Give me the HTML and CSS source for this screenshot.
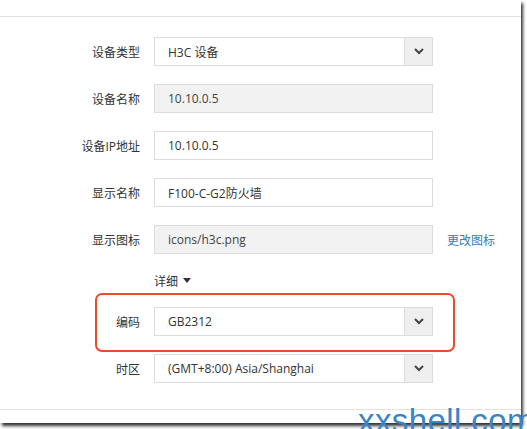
FILE: index.html
```html
<!DOCTYPE html>
<html lang="zh-CN">
<head>
    <meta charset="UTF-8">
    <title>设备属性</title>
    <link rel="stylesheet" href="styles.css">
</head>
<body>
    <div class="dialog">
        <div class="dialog-head"></div>

        <div class="dialog-body">
            <div class="form-row">
                <label class="form-label">设备类型</label>
                <div class="select">
                    <span class="select-value">H3C 设备</span>
                    <span class="select-btn">
                        <svg width="10" height="7" viewBox="0 0 10 7"><polyline points="1,1 5,5 9,1" fill="none" stroke="#444" stroke-width="2"/></svg>
                    </span>
                </div>
            </div>

            <div class="form-row">
                <label class="form-label">设备名称</label>
                <div class="input disabled">10.10.0.5</div>
            </div>

            <div class="form-row">
                <label class="form-label">设备IP地址</label>
                <div class="input">10.10.0.5</div>
            </div>

            <div class="form-row">
                <label class="form-label">显示名称</label>
                <div class="input">F100-C-G2防火墙</div>
            </div>

            <div class="form-row">
                <label class="form-label">显示图标</label>
                <div class="input disabled">icons/h3c.png</div>
                <a href="#" class="form-link">更改图标</a>
            </div>

            <div class="form-row detail-row">
                <span class="form-label"></span>
                <div class="detail-toggle">详细 <span class="caret"></span></div>
            </div>

            <div class="form-row marked">
                <label class="form-label">编码</label>
                <div class="select">
                    <span class="select-value">GB2312</span>
                    <span class="select-btn">
                        <svg width="10" height="7" viewBox="0 0 10 7"><polyline points="1,1 5,5 9,1" fill="none" stroke="#444" stroke-width="2"/></svg>
                    </span>
                </div>
            </div>

            <div class="form-row">
                <label class="form-label">时区</label>
                <div class="select">
                    <span class="select-value">(GMT+8:00) Asia/Shanghai</span>
                    <span class="select-btn">
                        <svg width="10" height="7" viewBox="0 0 10 7"><polyline points="1,1 5,5 9,1" fill="none" stroke="#444" stroke-width="2"/></svg>
                    </span>
                </div>
            </div>
        </div>

        <div class="dialog-foot"></div>
    </div>

    <div class="watermark">xxshell.com</div>
</body>
</html>
```

FILE: styles.css
```css
* {
    margin: 0;
    padding: 0;
    box-sizing: border-box;
}

body {
    background: #fff;
    color: #333;
    font-family: "Open Sans", "Noto Sans CJK SC", sans-serif;
    font-size: 12px;
    width: 527px;
    height: 429px;
    overflow: hidden;
    position: relative;
}

.dialog {
    width: 521px;
    height: 423px;
    background: #fff;
    display: flex;
    flex-direction: column;
    box-shadow: 2px 3px 3px rgba(0, 0, 0, 0.8);
}

.dialog-head {
    height: 17px;
    flex-shrink: 0;
    border-bottom: 1px solid #e2e2e2;
}

.dialog-body {
    flex: 1;
    padding-top: 20px;
    display: flex;
    flex-direction: column;
    gap: 18px;
}

.dialog-foot {
    height: 14px;
    flex-shrink: 0;
    border-top: 1px solid #e2e2e2;
}

.form-row {
    display: flex;
    align-items: center;
    gap: 14px;
    height: 29px;
}

.form-row.detail-row {
    height: 17px;
}

.form-row.marked {
    position: relative;
}

.form-row.marked::after {
    content: "";
    position: absolute;
    left: 95px;
    top: -14px;
    width: 356px;
    height: 55px;
    border: 2.5px solid #eb4a2c;
    border-radius: 7px;
    pointer-events: none;
}

.form-label {
    width: 140px;
    flex-shrink: 0;
    text-align: right;
    color: #333;
}

.input {
    width: 279px;
    height: 29px;
    border: 1px solid #dcdcdc;
    background: #fff;
    padding: 0 13px;
    display: flex;
    align-items: center;
    font-size: 12px;
    color: #333;
}

.input.disabled {
    background: #f2f2f2;
    color: #444;
}

.select {
    width: 279px;
    height: 29px;
    border: 1px solid #dcdcdc;
    display: flex;
    font-size: 12px;
}

.select-value {
    flex: 1;
    padding: 0 13px;
    display: flex;
    align-items: center;
    white-space: nowrap;
}

.select-btn {
    width: 28px;
    background: #efefef;
    border-left: 1px solid #dcdcdc;
    display: flex;
    align-items: center;
    justify-content: center;
}

.form-link {
    color: #2f7cc0;
    text-decoration: none;
}

.detail-toggle {
    display: flex;
    align-items: center;
    gap: 5px;
}

.caret {
    width: 0;
    height: 0;
    border-left: 4px solid transparent;
    border-right: 4px solid transparent;
    border-top: 5px solid #333;
}

.watermark {
    position: absolute;
    left: 358px;
    top: 404px;
    font-family: "Liberation Sans", Arial, sans-serif;
    font-size: 33px;
    line-height: 33px;
    letter-spacing: 0.4px;
    color: #3a83c6;
    white-space: nowrap;
}
```
